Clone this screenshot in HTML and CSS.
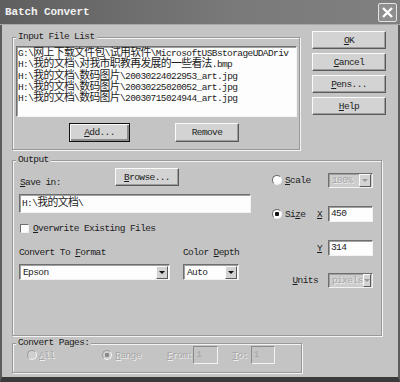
FILE: index.html
```html
<!DOCTYPE html>
<html lang="en">
<head>
    <meta charset="UTF-8">
    <title>Batch Convert</title>
    <link rel="stylesheet" href="styles.css">
</head>
<body>
    <div class="window">
        <div class="titlebar">
            <span class="title">Batch Convert</span>
            <span class="close">
                <svg width="13" height="13" viewBox="0 0 13 13"><path d="M2 2 L11 11 M11 2 L2 11" stroke="#fff" stroke-width="2.4" fill="none"/></svg>
            </span>
        </div>

        <div class="content">
            <div class="top">
                <fieldset class="group files">
                    <legend>Input File List</legend>
                    <div class="listbox">
                        <div>G:\<span class="zh">网上下载文件包</span>\<span class="zh">试用软件</span>\MicrosoftUSBstorageUDADriv</div>
                        <div>H:\<span class="zh">我的文档</span>\<span class="zh">对我市职教再发展的一些看法</span>.bmp</div>
                        <div>H:\<span class="zh">我的文档</span>\<span class="zh">数码图片</span>\20030224022953_art.jpg</div>
                        <div>H:\<span class="zh">我的文档</span>\<span class="zh">数码图片</span>\20030225020052_art.jpg</div>
                        <div>H:\<span class="zh">我的文档</span>\<span class="zh">数码图片</span>\20030715024944_art.jpg</div>
                    </div>
                    <div class="list-btns">
                        <button class="btn default add"><u>A</u>dd...</button>
                        <button class="btn remove">Remove</button>
                    </div>
                </fieldset>
                <div class="side">
                    <button class="btn"><u>O</u>K</button>
                    <button class="btn"><u>C</u>ancel</button>
                    <button class="btn"><u>P</u>ens...</button>
                    <button class="btn"><u>H</u>elp</button>
                </div>
            </div>

            <fieldset class="group output">
                <legend>Output</legend>
                <div class="out-inner">
                    <div class="out-left">
                        <div class="savein-row">
                            <span class="savein-label"><u>S</u>ave in:</span>
                            <button class="btn browse"><u>B</u>rowse...</button>
                        </div>
                        <div class="field save">H:\<span class="zh">我的文档</span>\</div>
                        <div class="check-row">
                            <span class="checkbox"></span>
                            <span class="check-label"><u>O</u>verwrite Existing Files</span>
                        </div>
                        <div class="format-row">
                            <div class="format-col">
                                <div class="lbl">Convert To <u>F</u>ormat</div>
                                <div class="select fmt"><span>Epson</span><i class="arrow"></i></div>
                            </div>
                            <div class="depth-col">
                                <div class="lbl">Color <u>D</u>epth</div>
                                <div class="select depth"><span>Auto</span><i class="arrow"></i></div>
                            </div>
                        </div>
                    </div>
                    <div class="out-right">
                        <div class="opt-row scale">
                            <span class="radio"></span>
                            <span class="opt-label"><u>S</u>cale</span>
                            <span class="axis"></span>
                            <div class="select small disabled"><span>100%</span><i class="arrow"></i></div>
                        </div>
                        <div class="opt-row size">
                            <span class="radio checked"></span>
                            <span class="opt-label">Si<u>z</u>e</span>
                            <span class="axis"><u>X</u></span>
                            <div class="field num">450</div>
                        </div>
                        <div class="opt-row ycoord">
                            <span class="radio hidden"></span>
                            <span class="opt-label"></span>
                            <span class="axis"><u>Y</u></span>
                            <div class="field num">314</div>
                        </div>
                        <div class="opt-row units">
                            <span class="units-label"><u>U</u>nits</span>
                            <div class="select small disabled"><span>pixels</span><i class="arrow"></i></div>
                        </div>
                    </div>
                </div>
            </fieldset>

            <fieldset class="group pages">
                <legend>Convert Pages:</legend>
                <div class="pages-row">
                    <span class="radio disabled all-radio"></span>
                    <span class="dim all-label"><u>A</u>ll</span>
                    <span class="radio disabled checked range-radio"></span>
                    <span class="dim range-label"><u>R</u>ange</span>
                    <span class="dim from-label"><u>F</u>rom:</span>
                    <div class="field page-box from-box">1</div>
                    <span class="dim to-label"><u>T</u>o:</span>
                    <div class="field page-box to-box">1</div>
                </div>
            </fieldset>
        </div>
    </div>
</body>
</html>
```

FILE: styles.css
```css
* { margin: 0; padding: 0; box-sizing: border-box; }
body {
    width: 400px; height: 382px;
    background: #c4c4c4;
    font-family: "Liberation Mono", "Noto Sans CJK SC", monospace;
    font-size: 9.5px;
    letter-spacing: -0.6px;
    color: #1c1c1c;
}
u { text-decoration: underline; text-underline-offset: 1px; }
.zh { font-size: 10.8px; }

.window {
    width: 400px; height: 382px;
    background: #c4c4c4;
    border-left: 2px solid #5c5c5c;
    border-right: 2px solid #5c5c5c;
    border-bottom: 5px solid #3a3a3a;
}
.titlebar {
    display: flex;
    align-items: center;
    justify-content: space-between;
    height: 25px;
    margin: 0 -2px;
    padding: 0 3px 0 5px;
    background: linear-gradient(90deg, #5f5f5f, #7a7a7a 60%, #808080);
    border-bottom: 1px solid #a8a8a8;
}
.title {
    color: #f2f2f2;
    font-size: 11px;
    font-weight: bold;
    letter-spacing: -0.1px;
}
.close {
    display: flex;
    align-items: center;
    justify-content: center;
    width: 19px; height: 19px;
    background: #8e8e8e;
    border: 1px solid #e4e4e4;
    border-radius: 2px;
}

.content { padding: 6px 0 0 10px; }
.top { display: flex; }

/* etched group boxes */
.group {
    border: 1px solid #989898;
    box-shadow: 1px 1px 0 #f4f4f4, inset 1px 1px 0 #f4f4f4;
    padding: 0 2px 0 3px;
    min-inline-size: 0;
}
.group legend {
    padding: 0 2px;
    line-height: 12px;
    background: #c4c4c4;
}

.files { width: 288px; padding-bottom: 7px; }
.listbox {
    margin-top: 3px;
    height: 71px;
    background: #fdfdfd;
    border: 1px solid;
    border-color: #707070 #f4f4f4 #f4f4f4 #707070;
    box-shadow: inset 1px 1px 0 #a0a0a0;
    padding: 1px 0 0 1px;
    line-height: 10.3px;
    white-space: nowrap;
    overflow: hidden;
}
.list-btns { display: flex; margin-top: 6px; }
.add { margin-left: 53px; width: 61px; height: 19px; }
.remove { margin-left: 45px; width: 64px; height: 19px; }

.side {
    display: flex;
    flex-direction: column;
    gap: 4px;
    margin-left: 12px;
}
.side .btn { width: 74px; height: 18px; }

.btn {
    font: inherit;
    letter-spacing: inherit;
    color: #1c1c1c;
    background: #d3d3d3;
    border: 1px solid;
    border-color: #fafafa #5a5a5a #5a5a5a #fafafa;
    box-shadow: inset -1px -1px 0 #9c9c9c;
}
.btn.default {
    border-color: #111;
    box-shadow: inset 1px 1px 0 #fafafa, inset -2px -2px 0 #8c8c8c;
}

.output { width: 370px; height: 182px; margin-top: 4px; }
.out-inner { display: flex; padding: 2px 0 0 3px; }
.out-left { width: 232px; }
.out-right { margin-left: 21px; }

.savein-row { display: flex; align-items: flex-end; height: 18px; }
.savein-label { width: 96px; padding-left: 1px; line-height: 12px; margin-bottom: -3px; }
.browse { width: 64px; height: 18px; }

.field {
    background: #fdfdfd;
    border: 1px solid;
    border-color: #6e6e6e #f2f2f2 #f2f2f2 #6e6e6e;
    box-shadow: inset 1px 1px 0 #a0a0a0;
    white-space: nowrap;
    overflow: hidden;
}
.field.save { margin-top: 8px; height: 19px; padding: 0 2px; line-height: 17px; }

.check-row { display: flex; align-items: center; margin-top: 11px; height: 9px; }
.checkbox {
    width: 9px; height: 9px;
    margin-left: 1px;
    background: #fdfdfd;
    border: 1px solid;
    border-color: #6e6e6e #f2f2f2 #f2f2f2 #6e6e6e;
}
.check-label { margin-left: 4px; line-height: 12px; }

.format-row { display: flex; margin-top: 14px; }
.format-col { width: 164px; }
.lbl { line-height: 12px; }
.select {
    display: flex;
    align-items: center;
    justify-content: space-between;
    margin-top: 5px;
    height: 16px;
    padding-left: 3px;
    background: #fdfdfd;
    border: 1px solid;
    border-color: #6e6e6e #f2f2f2 #f2f2f2 #6e6e6e;
    box-shadow: inset 1px 1px 0 #a0a0a0;
}
.select.fmt { width: 151px; }
.select.depth { width: 56px; }
.arrow {
    display: flex;
    align-items: center;
    justify-content: center;
    width: 12px; height: 13px;
    margin-right: 1px;
    background: #d3d3d3;
    border: 1px solid;
    border-color: #fafafa #5a5a5a #5a5a5a #fafafa;
}
.arrow::after {
    content: "";
    border-left: 3px solid transparent;
    border-right: 3px solid transparent;
    border-top: 3px solid #111;
}

.opt-row { display: flex; align-items: center; height: 16px; }
.opt-row.scale { margin-top: 4px; }
.opt-row.size { margin-top: 18px; }
.opt-row.ycoord { margin-top: 18px; }
.opt-row.units { margin-top: 16px; }
.opt-row .radio { margin-right: 3px; }
.opt-label { width: 28px; }
.axis { width: 15px; padding-left: 4px; }
.units-label { width: 56px; padding-right: 10px; text-align: right; }
.select.small { width: 45px; margin-top: 0; height: 15px; }
.field.num { width: 45px; height: 16px; padding-left: 2px; line-height: 14px; }

.select.disabled {
    background: #cdcdcd;
    color: #a6a6a6;
    text-shadow: 1px 1px 0 #efefef;
}
.select.disabled .arrow::after { border-top-color: #9a9a9a; }

.radio {
    width: 10px; height: 10px;
    border-radius: 50%;
    background: #fdfdfd;
    border: 1px solid;
    border-color: #6a6a6a #f2f2f2 #f2f2f2 #6a6a6a;
}
.radio.checked { background: radial-gradient(circle, #111 0 2px, #fdfdfd 2.5px); }
.radio.hidden { visibility: hidden; }
.radio.disabled { background: #d0d0d0; border-color: #9a9a9a #f2f2f2 #f2f2f2 #9a9a9a; }
.radio.disabled.checked { background: radial-gradient(circle, #8a8a8a 0 2px, #d0d0d0 2.5px); }

.pages { width: 290px; height: 36px; margin-top: 1px; }
.pages-row { display: flex; align-items: center; height: 18px; margin-top: -3px; }
.dim { color: #a6a6a6; text-shadow: 1px 1px 0 #efefef; }
.all-radio { margin-left: 11px; }
.all-label { margin-left: 2px; }
.range-radio { margin-left: 48px; }
.range-label { margin-left: 3px; }
.from-label { margin-left: 26px; }
.from-box { margin-left: 1px; }
.to-label { margin-left: 14px; }
.to-box { margin-left: 3px; }
.page-box {
    width: 25px; height: 18px;
    padding-left: 2px;
    background: #c4c4c4;
    color: #a6a6a6;
    line-height: 16px;
    border-color: #8a8a8a #f2f2f2 #f2f2f2 #8a8a8a;
    box-shadow: none;
}
.to-box { width: 24px; }
```
